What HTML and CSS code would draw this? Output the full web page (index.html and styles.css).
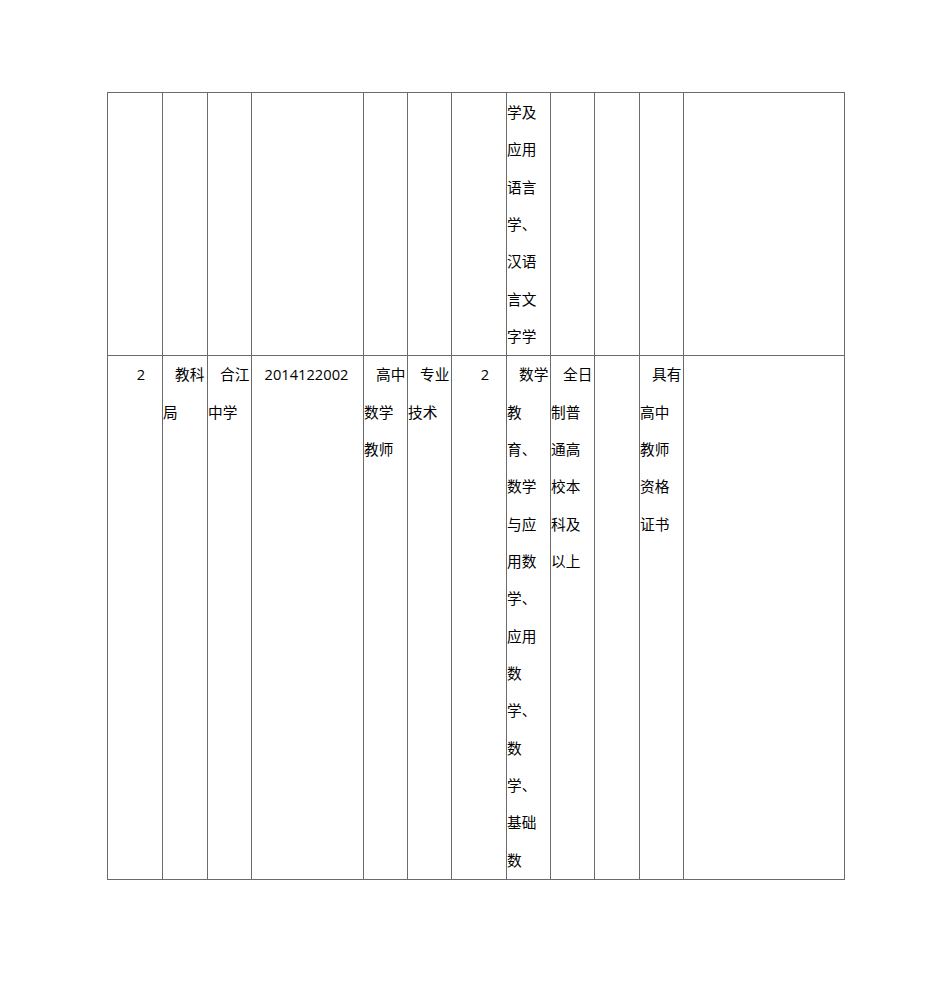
FILE: index.html
```html
<!DOCTYPE html>
<html lang="zh-CN">
<head>
<meta charset="utf-8">
<title>岗位表</title>
<link rel="stylesheet" href="styles.css">
</head>
<body>
<div class="page">
<table class="grid">
<colgroup>
<col class="c1"><col class="c2"><col class="c3"><col class="c4"><col class="c5"><col class="c6"><col class="c7"><col class="c8"><col class="c9"><col class="c10"><col class="c11"><col class="c12">
</colgroup>
<tbody>
<tr class="row-cont">
<td></td><td></td><td></td><td></td><td></td><td></td><td></td>
<td class="cont">学及<br>应用<br>语言<br>学、<br>汉语<br>言文<br>字学</td>
<td></td><td></td><td></td><td></td>
</tr>
<tr class="row-main">
<td class="num">2</td>
<td class="ind">教科<br>局</td>
<td class="ind">合江<br>中学</td>
<td class="code">2014122002</td>
<td class="ind">高中<br>数学<br>教师</td>
<td class="ind">专业<br>技术</td>
<td class="num">2</td>
<td class="ind">数学<br>教<br>育、<br>数学<br>与应<br>用数<br>学、<br>应用<br>数<br>学、<br>数<br>学、<br>基础<br>数</td>
<td class="ind">全日<br>制普<br>通高<br>校本<br>科及<br>以上</td>
<td></td>
<td class="ind">具有<br>高中<br>教师<br>资格<br>证书</td>
<td></td>
</tr>
</tbody>
</table>
</div>
</body>
</html>
```

FILE: styles.css
```css
html, body {
  margin: 0;
  padding: 0;
  background: #ffffff;
}
.page {
  padding: 92px 0 0 107px;
}
.grid {
  border-collapse: collapse;
  table-layout: fixed;
  width: 737px;
  font-family: "Open Sans", "Noto Sans CJK SC", sans-serif;
  font-size: 14.67px;
  line-height: 37.33px;
  color: #000;
}
.grid td {
  border: 1px solid #6b6b6b;
  padding: 1px 0 0 0;
  vertical-align: top;
  white-space: nowrap;
  overflow: hidden;
  text-align: left;
}
.row-main td {
  padding-top: 0;
}
.c1 { width: 55px; }
.c2 { width: 45px; }
.c3 { width: 44px; }
.c4 { width: 112px; }
.c5 { width: 44px; }
.c6 { width: 44px; }
.c7 { width: 55px; }
.c8 { width: 44px; }
.c9 { width: 44px; }
.c10 { width: 45px; }
.c11 { width: 44px; }
.c12 { width: 161px; }
.grid td.ind {
  text-indent: 12px;
}
.grid td.num {
  text-align: center;
  text-indent: 12px;
}
.grid td.code {
  text-align: center;
  padding-right: 2px;
}
.grid td.cont {
  text-indent: 0;
}
```
